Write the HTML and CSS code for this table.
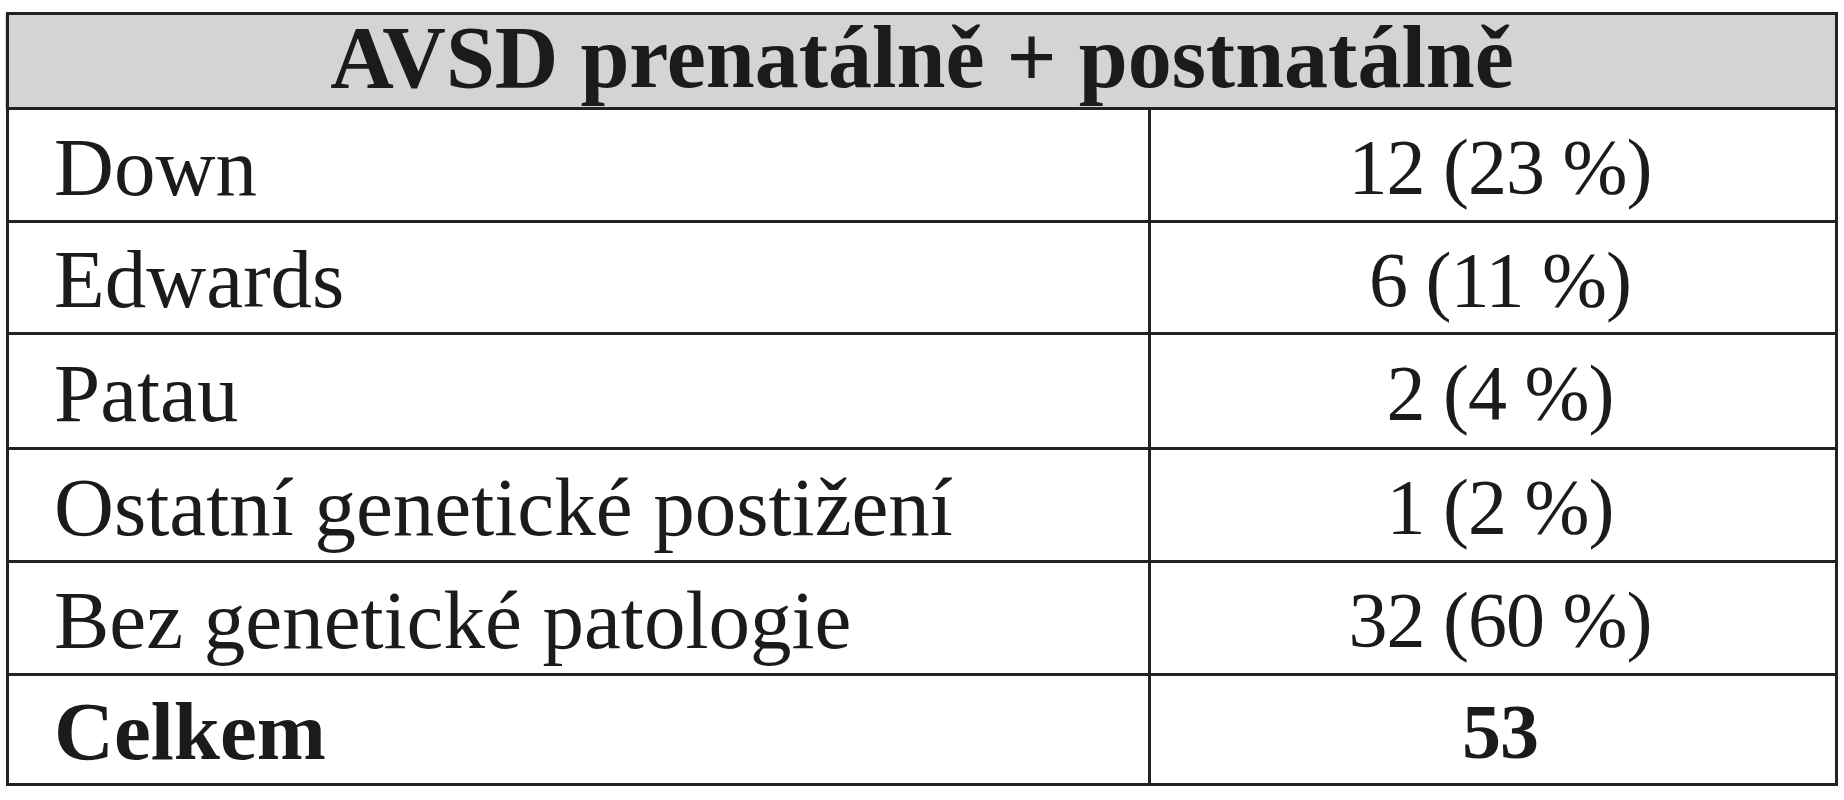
FILE: index.html
```html
<!DOCTYPE html>
<html lang="cs">
<head>
<meta charset="utf-8">
<title>AVSD prenatálně + postnatálně</title>
<link rel="stylesheet" href="styles.css">
</head>
<body>
<table class="stats">
  <colgroup>
    <col class="col-label">
    <col class="col-value">
  </colgroup>
  <thead>
    <tr class="head-row">
      <th colspan="2" class="head-cell">AVSD prenatálně + postnatálně</th>
    </tr>
  </thead>
  <tbody>
    <tr class="row r1"><td class="label">Down</td><td class="value">12 (23 %)</td></tr>
    <tr class="row r2"><td class="label">Edwards</td><td class="value">6 (11 %)</td></tr>
    <tr class="row r3"><td class="label">Patau</td><td class="value">2 (4 %)</td></tr>
    <tr class="row r4"><td class="label">Ostatní genetické postižení</td><td class="value">1 (2 %)</td></tr>
    <tr class="row r5"><td class="label">Bez genetické patologie</td><td class="value">32 (60 %)</td></tr>
    <tr class="row r6 total"><td class="label">Celkem</td><td class="value">53</td></tr>
  </tbody>
</table>
</body>
</html>
```
FILE: styles.css
```css
html, body {
  margin: 0;
  padding: 0;
  background: #ffffff;
}

body {
  font-family: "Liberation Serif", "Times New Roman", serif;
  color: #1b1b1b;
}

.stats {
  border-collapse: collapse;
  margin: 12px 0 0 6px;
  width: 1829px;
  table-layout: fixed;
}

.stats .col-label {
  width: 1142px;
}

.stats .col-value {
  width: 687px;
}

.stats th,
.stats td {
  border: 3px solid #222222;
  padding: 0;
  vertical-align: middle;
  line-height: 1;
}

.stats .head-row {
  height: 95px;
}

.stats .head-cell {
  background: #d3d4d6;
  font-weight: bold;
  font-size: 88px;
  line-height: 84px;
  text-align: center;
  padding-bottom: 6px;
  box-shadow: -3px 0 0 #d6d7d9;
}

.stats .row {
  height: 113px;
}

.stats .r2 { height: 112px; }
.stats .r3 { height: 115px; }
.stats .r6 { height: 110px; }

.stats .label {
  font-size: 83px;
  text-align: left;
  padding-left: 45px;
  padding-top: 4px;
}

.stats .value {
  font-size: 78px;
  text-align: center;
  padding-top: 4px;
  padding-left: 14px;
  letter-spacing: -1px;
}

.stats .total .label,
.stats .total .value {
  font-weight: bold;
}
```
